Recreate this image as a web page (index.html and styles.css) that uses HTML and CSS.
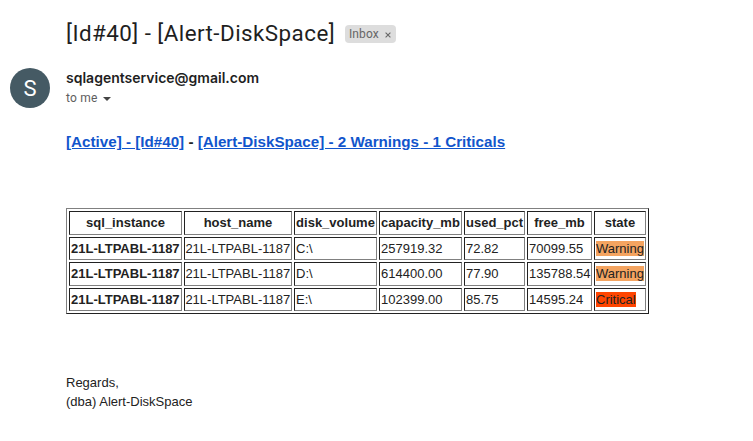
FILE: index.html
```html
<!DOCTYPE html>
<html lang="en">
<head>
<meta charset="utf-8">
<title>Alert-DiskSpace</title>
<link rel="stylesheet" href="styles.css">
</head>
<body>
<header class="subject">
  <h1>[Id#40] - [Alert-DiskSpace]</h1>
  <span class="label">Inbox <svg class="close" width="6" height="6" viewBox="0 0 6 6"><path d="M.6.6l4.8 4.8M5.4.6L.6 5.4" stroke="#666" stroke-width="1.1"/></svg></span>
</header>
<section class="sender">
  <div class="avatar">S</div>
  <div>
    <div class="from">sqlagentservice@gmail.com</div>
    <div class="to">to me <span class="caret"></span></div>
  </div>
</section>
<main class="message">
  <h2><a href="#">[Active] - [Id#40]</a> - <a href="#">[Alert-DiskSpace] - 2 Warnings - 1 Criticals</a></h2>
  <table>
    <colgroup><col class="c1"><col class="c2"><col class="c3"><col class="c4"><col class="c5"><col class="c6"><col class="c7"></colgroup>
    <tr class="tall"><th>sql_instance</th><th>host_name</th><th>disk_volume</th><th>capacity_mb</th><th>used_pct</th><th>free_mb</th><th>state</th></tr>
    <tr><td><b>21L-LTPABL-1187</b></td><td class="host">21L-LTPABL-1187</td><td>C:\</td><td>257919.32</td><td>72.82</td><td>70099.55</td><td><span class="warning">Warning</span></td></tr>
    <tr class="tall"><td><b>21L-LTPABL-1187</b></td><td class="host">21L-LTPABL-1187</td><td>D:\</td><td>614400.00</td><td>77.90</td><td>135788.54</td><td><span class="warning">Warning</span></td></tr>
    <tr><td><b>21L-LTPABL-1187</b></td><td class="host">21L-LTPABL-1187</td><td>E:\</td><td>102399.00</td><td>85.75</td><td>14595.24</td><td><span class="critical">Critical</span></td></tr>
  </table>
  <p>Regards,<br>(dba) Alert-DiskSpace</p>
</main>
</body>
</html>
```
FILE: styles.css
```css
body { margin: 0; background: #fff; color: #222; font-family: "Liberation Sans", Arial, sans-serif; }
.subject { display: flex; align-items: center; padding: 20px 0 0 66px; height: 28px; }
h1 { margin: 0 0 2px; width: 279px; font: 400 22.4px/26px Roboto, sans-serif; letter-spacing: .45px; color: #1f1f1f; white-space: nowrap; }
.label { box-sizing: border-box; display: flex; align-items: center; gap: 6px; width: 51px; height: 18px; padding-left: 4px; background: #ddd; color: #666; border-radius: 4px; font: 12px/18px Roboto, sans-serif; letter-spacing: .1px; white-space: nowrap; }
.close { margin-top: 2px; }
.sender { display: flex; gap: 16px; padding: 20px 0 0 10px; height: 40px; }
.avatar { width: 40px; height: 40px; border-radius: 50%; background: #455a64; color: #fff; font: 22px/41px Roboto, sans-serif; text-align: center; }
.from { font: 600 14px/20px Inter, sans-serif; color: #1f1f1f; }
.to { display: flex; align-items: center; gap: 5px; font: 12px/20px Roboto, sans-serif; color: #5e5e5e; letter-spacing: .2px; }
.caret { margin-top: 1px; border: 4px solid transparent; border-top-color: #444; border-bottom: 0; }
.message { padding: 24px 0 0 66px; font-size: 13px; }
h2 { margin: 0; font-size: 15.2px; line-height: 20px; white-space: nowrap; }
a { color: #15c; }
table { table-layout: fixed; width: 583px; margin-top: 56px; border: 1px solid; border-color: #808080 #222 #222 #808080; border-spacing: 2px; }
th, td { height: 23px; padding: 0 1px 1px; border: 1px solid; border-color: #222 #808080 #808080 #222; box-sizing: border-box; white-space: nowrap; text-align: left; }
th { text-align: center; }
.tall > * { height: 24px; }
td.host { padding-left: .4px; }
.c1 { width: 113px; }
.c2 { width: 108px; }
.c3 { width: 83px; }
.c4 { width: 83px; }
.c5 { width: 61px; }
.c6 { width: 65px; }
.c7 { width: 52px; }
.warning { background: #f4a460; }
.critical { background: #ff4500; }
p { margin: 59px 0 0; line-height: 19px; }
```
